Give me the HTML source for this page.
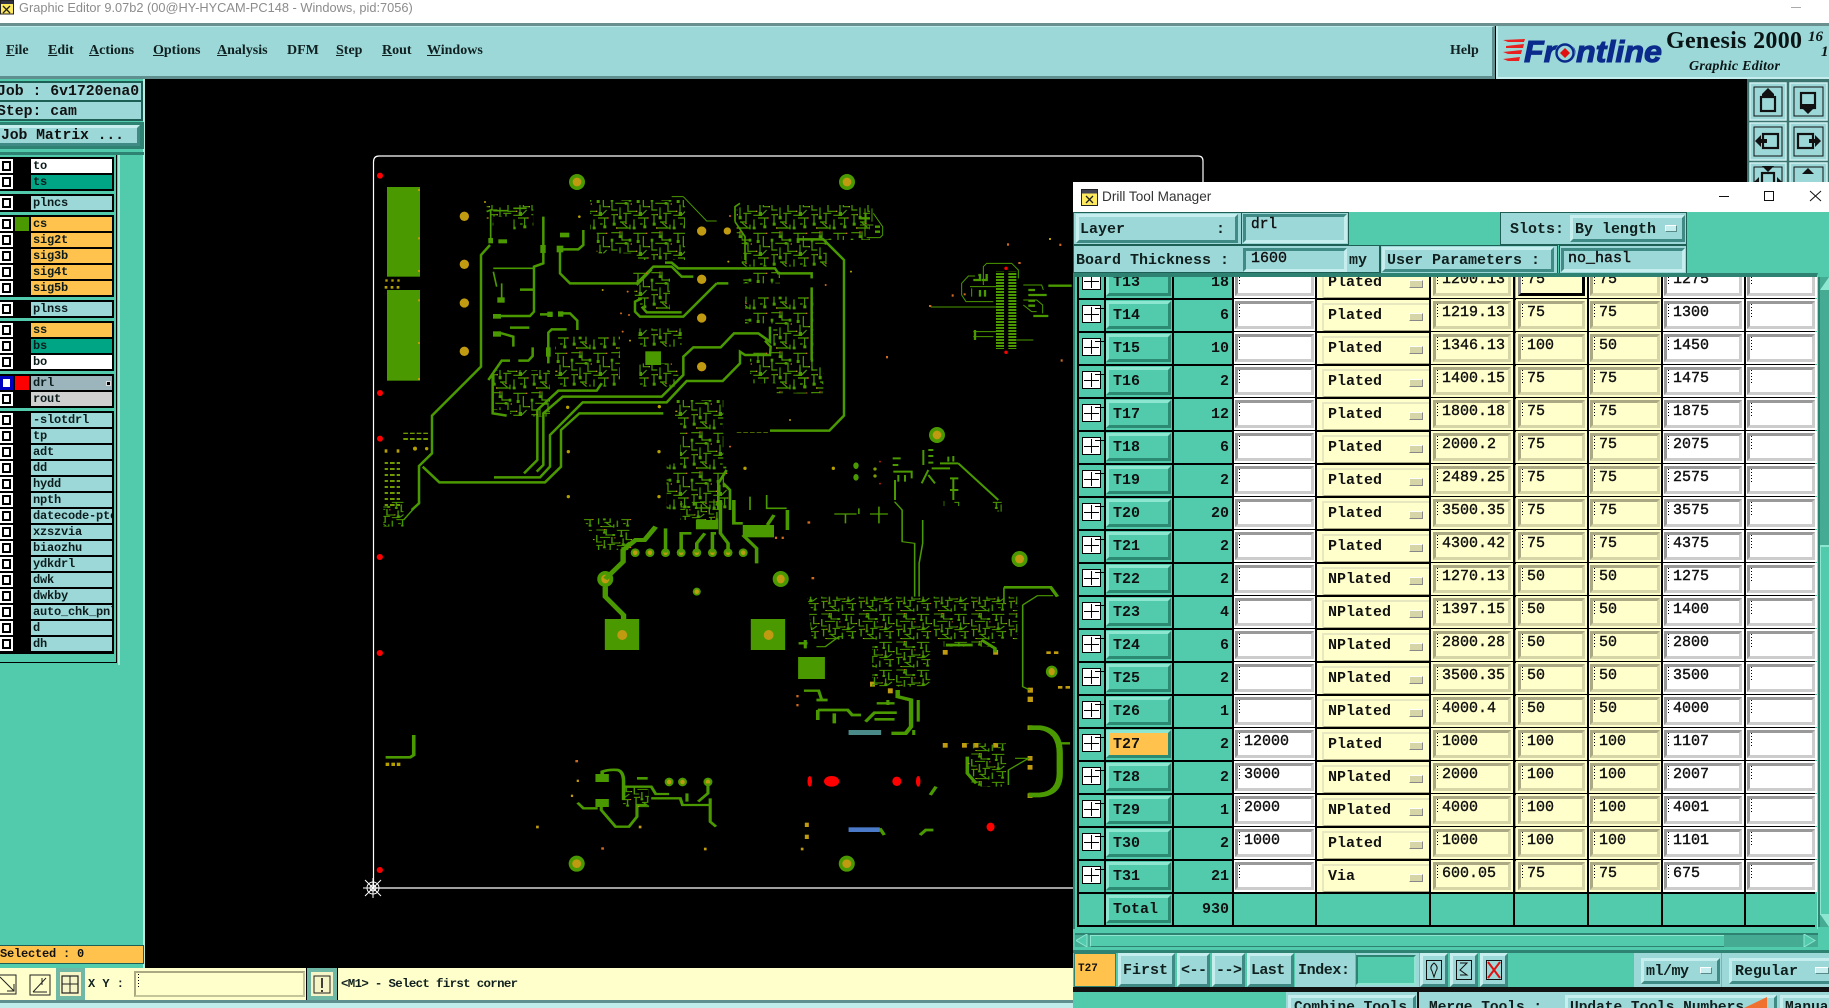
<!DOCTYPE html>
<html><head><meta charset="utf-8"><style>
html,body{margin:0;padding:0;background:#000;width:1829px;height:1008px;overflow:hidden}
*{box-sizing:border-box}
div,b,span{position:absolute;display:block}
#root{left:0;top:0;width:1829px;height:1008px;overflow:hidden;background:#000}
body{font-family:"Liberation Mono",monospace;font-weight:bold;color:#111}
.m{top:42px;font:bold 14px "Liberation Serif",serif;color:#102020;line-height:18px}
.m u{text-decoration:underline}
.bv{background:#9cd8d8;border:3px solid;border-color:#c6eeee #3f8a84 #3f8a84 #c6eeee}
.g{left:0;width:114px;background:#000}
.l{left:31px;width:81px;height:14px;background:#9cd8d8;font-size:12px;line-height:14px;padding-left:2px;letter-spacing:-.2px;white-space:nowrap;overflow:hidden;color:#0c1c1c}
.o{background:#ffc24d}
.cb{left:0;width:13px;height:14px;background:#000;border:2px solid #fff}
.cb:after{content:"";position:absolute;left:2px;top:2px;width:5px;height:6px;background:#fff}
.f{font-size:15px;line-height:18px;white-space:pre;color:#10201e}
.r{left:0;width:1815px;height:33px}
.r:before{content:"";position:absolute;left:1078px;width:737px;top:0;height:2px;background:#000}
.ic{left:1082px;top:7px;width:19px;height:18px;background:#fff;border:1px solid #000}
.ic:before{content:"";position:absolute;left:8px;top:1px;width:1px;height:14px;background:#000}
.ic:after{content:"";position:absolute;left:1px;top:8px;width:15px;height:1px;background:#000;box-shadow:11px -6px 0 0 #000}
.t{left:1106px;top:3px;width:65px;height:28px;background:#52cbac;border:3px solid;border-color:#8de6d0 #2c8a72 #2c8a72 #8de6d0;font-size:15px;line-height:24px;padding-left:4px}
.n{left:1173px;top:9px;width:56px;text-align:right;font-size:15px;line-height:18px}
.i{top:3px;height:28px;border:3px solid;font-size:15px;line-height:14px;padding:2px 0 0 6px;font-weight:normal;-webkit-text-stroke:.4px #111;white-space:pre;overflow:hidden}
.i:before{content:"";position:absolute;left:1px;top:0;width:1px;height:15px;background:repeating-linear-gradient(#000 0 1px,transparent 1px 3px)}
.w{background:#fff;border-color:#999 #ccc #ccc #999;box-shadow:0 0 0 2px #fff}
.y{background:#ffffcc;border-color:#aaa983 #d5d5a8 #d5d5a8 #aaa983;box-shadow:0 0 0 2px #ffffcc}
.a{left:1235px;width:79px}.c{left:1433px;width:78px}.e{left:1518px;width:67px}.h{left:1590px;width:70px}.j{left:1664px;width:78px}.k{left:1747px;width:68px}
.d{left:1316px;top:2px;width:113px;height:31px;background:#ffffcc;font-size:15px;line-height:32px;padding-left:12px}
.d:before{content:"";position:absolute;left:6px;top:3px;width:105px;height:25px;border:2px solid;border-color:#e8e8c0 #aaa983 #aaa983 #e8e8c0}
.d:after{content:"";position:absolute;left:93px;top:13px;width:12px;height:6px;background:#d5d5a8;border:1px solid;border-color:#fff #888 #888 #fff}
.vl{top:0;height:930px;width:2px;background:#000}
.nub{width:12px;height:7px;background:#c6eeee;border:1px solid;border-color:#fff #5a8a88 #5a8a88 #fff}
.st{left:0;font-size:14.8px;line-height:18px;white-space:pre}
</style></head><body><div id="root">

<!-- PCB canvas -->
<svg style="position:absolute;left:0;top:0" width="1829" height="1008" viewBox="0 0 1829 1008">
<defs>
<pattern id="p" width="120" height="120" patternUnits="userSpaceOnUse">
<path d="M4 8H30V20M36 4V30H60M70 10H110M84 10V36M100 18V50H118M6 30V60H22M16 40H48M54 38V64H80M30 52V84M90 44V76H70M4 74H24M12 74V104M40 70H64M48 70V96H30M72 88V116M84 84H114M104 84V112M20 114H60M90 102H98M60 104V118M110 60L96 74M34 96L52 112" fill="none" stroke="#4b9900" stroke-width="3.6"/>
<g fill="#4b9900"><rect x="26" y="16" width="9" height="8"/><rect x="56" y="26" width="8" height="9"/><rect x="80" y="30" width="9" height="9"/><rect x="2" y="26" width="8" height="9"/><rect x="44" y="36" width="8" height="8"/><rect x="86" y="66" width="10" height="12"/><rect x="26" y="78" width="9" height="10"/><rect x="68" y="110" width="9" height="8"/><rect x="100" y="106" width="9" height="9"/><rect x="8" y="98" width="9" height="9"/></g>
<g fill="#d06a20"><rect x="28" y="4" width="4" height="4"/><rect x="108" y="8" width="4" height="4"/><rect x="62" y="40" width="4" height="4"/><rect x="20" y="72" width="4" height="4"/><rect x="112" y="82" width="4" height="4"/><rect x="46" y="98" width="4" height="4"/></g>
<g fill="#b9a010"><rect x="116" y="48" width="4" height="4"/><rect x="78" y="62" width="4" height="4"/><rect x="18" y="112" width="4" height="4"/></g>
</pattern>
<pattern id="q" width="84" height="84" patternUnits="userSpaceOnUse">
<path d="M3 6H21V14M25 3V21H42M49 7H77M59 7V25M70 13V35H83M4 21V42H15M11 28H34M38 27V45H56M21 36V59M63 31V53H49M3 52H17M8 52V73M28 49H45M34 49V67H21M50 62V81M59 59H80M73 59V78M14 80H42M63 71H69M42 73V83M77 42L67 52M24 67L36 78" fill="none" stroke="#4b9900" stroke-width="3"/>
<g fill="#4b9900"><rect x="18" y="11" width="6" height="6"/><rect x="39" y="18" width="6" height="6"/><rect x="56" y="21" width="6" height="6"/><rect x="60" y="46" width="7" height="8"/><rect x="18" y="55" width="6" height="6"/><rect x="70" y="74" width="6" height="6"/></g>
<g fill="#d06a20"><rect x="20" y="3" width="3" height="3"/><rect x="43" y="28" width="3" height="3"/><rect x="14" y="50" width="3" height="3"/><rect x="78" y="57" width="3" height="3"/></g>
<g fill="#b9a010"><rect x="80" y="33" width="3" height="3"/><rect x="54" y="43" width="3" height="3"/><rect x="12" y="78" width="3" height="3"/></g>
</pattern>
<pattern id="s" width="10" height="9" patternUnits="userSpaceOnUse"><rect width="10" height="6" fill="#4b9900"/></pattern>
<pattern id="t" width="20" height="18" patternUnits="userSpaceOnUse"><rect width="14" height="6" fill="#6f9a00"/></pattern>
</defs>

<!-- outline -->
<path d="M373.5 888V162Q373.5 156 379 156H1198Q1203 156 1203 161V182" fill="none" stroke="#fff" stroke-width="1.2"/>
<path d="M373 888H1073" stroke="#fff" stroke-width="1.2"/>
<g stroke="#fff" stroke-width="1" fill="none"><circle cx="373" cy="888" r="6"/><circle cx="373" cy="888" r="3"/><path d="M365 880L381 896M381 880L365 896M373 878V898M363 888H383"/></g>

<!-- upper-left quadrant -->
<g transform="translate(370,150) scale(.33333)">
<g fill="#4b9900"><rect x="51" y="111" width="99" height="269"/><rect x="51" y="420" width="99" height="272"/></g>
<g fill="#b5a000"><rect x="144" y="117" width="6" height="6"/><rect x="144" y="262" width="6" height="6"/><rect x="144" y="360" width="6" height="6"/><rect x="144" y="448" width="6" height="6"/><rect x="144" y="576" width="6" height="6"/><rect x="144" y="684" width="6" height="6"/>
<rect x="46" y="388" width="7" height="7"/><rect x="64" y="388" width="7" height="7"/><rect x="82" y="388" width="7" height="7"/><rect x="44" y="408" width="8" height="8"/><rect x="62" y="408" width="8" height="8"/><rect x="80" y="408" width="8" height="8"/></g>
<g fill="#f00"><circle cx="30" cy="77" r="9"/><circle cx="30" cy="729" r="9"/><circle cx="30" cy="866" r="9"/></g>
<g fill="#c09a10"><circle cx="283" cy="199" r="14"/><circle cx="283" cy="343" r="14"/><circle cx="283" cy="459" r="14"/><circle cx="283" cy="604" r="14"/><circle cx="995" cy="243" r="14"/><circle cx="1072" cy="243" r="11"/><circle cx="995" cy="388" r="14"/><circle cx="995" cy="504" r="14"/><circle cx="995" cy="650" r="14"/></g>
<g fill="#4b9900"><circle cx="621" cy="96" r="24"/><circle cx="1431" cy="96" r="24"/></g><g fill="#c09a10"><circle cx="621" cy="96" r="13"/><circle cx="1431" cy="96" r="13"/></g>
<g fill="none" stroke="#4b9900" stroke-width="7.5">
<path d="M360 285L333 315V650L186 797V910L147 948V1060L125 1080"/>
<path d="M158 950L208 997H525L573 950V840L628 790H880"/>
<path d="M372 982H510L540 950V855L638 757H890L950 693H1058L1110 640V605L1125 615H1200L1202 590L1185 572"/>
<path d="M462 970L502 930V780L565 722H680L695 700"/>
<path d="M500 965L520 945V790L578 740H875L940 675V620L970 592H1052L1092 550H1165L1200 575V530"/>
<path d="M1200 842H1378L1422 797V330L1360 268H1280"/>
<path d="M570 295V370L600 400H800L850 350H905L935 380H970"/>
<path d="M800 405L845 358M570 298H625L640 285V240"/>
<path d="M885 338H905L925 355H1215L1225 370H1325V385M1325 412V630"/>
<path d="M1040 400L940 500H810L795 485V455L815 445M1040 400H1075M815 470L830 487H935"/>
<path d="M370 498H480L492 485V350L520 340V200M450 419H490"/>
<path d="M370 550H395L430 560V590M420 533H478"/>
<path d="M355 690L395 632H420M445 632H475L488 618V592"/>
<path d="M368 670V790L410 797"/>
<path d="M510 493H548M565 490H600L622 512V540M590 538H545L535 548V640"/>
<path stroke-width="5" d="M362 270V180L350 185M370 182H415M430 175H470M370 355H490M370 365L380 410M395 400V450M1095 215V170L1110 160M1095 215L1125 260V330"/>
<path stroke-width="3" d="M940 140L1010 213H1040M905 140H940"/>
</g>
<g fill="#4b9900"><rect x="570" y="248" width="28" height="14"/><rect x="385" y="268" width="26" height="12"/><rect x="355" y="264" width="14" height="16"/><rect x="511" y="285" width="16" height="24"/><rect x="560" y="287" width="20" height="20"/><rect x="369" y="492" width="24" height="14"/><rect x="369" y="544" width="24" height="16"/><rect x="532" y="485" width="16" height="16"/><rect x="564" y="484" width="16" height="16"/><rect x="826" y="604" width="47" height="41"/><rect x="382" y="442" width="22" height="16"/><rect x="528" y="592" width="14" height="28"/></g>
<g fill="url(#p)">
<path d="M660 150H945V330H800V310H680V240H660Z"/>
<path d="M1100 165H1500V270H1370V350H1115V265H1100Z"/>
<path d="M785 365H900V480H800Z"/>
<path d="M1120 365H1230V400H1120ZM1125 440H1330V730H1220V700H1140V600H1210V520H1125Z"/>
<path d="M370 660H540V800H420V780H370Z"/>
<path d="M555 560H750V710H555Z"/>
<path d="M805 535H935V590H805Z"/>
<path d="M808 640H925V710H808Z"/>
<path d="M915 750H1060V950H1075V1080H890V940H930V830H915Z"/>
<path d="M350 165H490V240H430V200H370V230H350Z"/>
<path d="M1280 650H1360V730H1280Z"/>
</g>
<g fill="url(#t)"><rect x="44" y="935" width="46" height="145"/><rect x="95" y="848" width="80" height="24"/></g>
<g fill="#b5a000"><circle cx="135" cy="896" r="6"/><circle cx="170" cy="896" r="5"/><rect x="44" y="898" width="8" height="10"/><rect x="80" y="898" width="8" height="10"/><circle cx="595" cy="905" r="5"/><circle cx="867" cy="905" r="5"/><circle cx="1125" cy="955" r="5"/><circle cx="1390" cy="955" r="5"/><circle cx="595" cy="1040" r="5"/><circle cx="867" cy="1040" r="5"/><circle cx="868" cy="770" r="5"/><circle cx="593" cy="772" r="5"/><circle cx="628" cy="200" r="4"/><circle cx="1075" cy="335" r="3"/><circle cx="1260" cy="810" r="3"/><circle cx="1443" cy="365" r="3"/><circle cx="698" cy="420" r="3"/><circle cx="780" cy="572" r="3"/><circle cx="345" cy="156" r="3"/></g>
<g fill="#d06a20"><circle cx="1367" cy="405" r="3"/><circle cx="777" cy="495" r="3"/><circle cx="753" cy="490" r="3"/><circle cx="758" cy="545" r="3"/><circle cx="1080" cy="890" r="3"/><circle cx="1080" cy="198" r="3"/><circle cx="773" cy="425" r="3"/></g>
<g fill="#4b9900"><ellipse cx="1458" cy="947" rx="8" ry="10"/><ellipse cx="1458" cy="982" rx="8" ry="10"/><rect x="1100" y="838" width="100" height="10" fill="url(#t)"/><path d="M1140 1040V1080M1190 1035V1075H1250" fill="none" stroke="#4b9900" stroke-width="5"/><path d="M1045 1000L1070 960M1045 990V1080M1060 1000L1080 1020V1080" fill="none" stroke="#4b9900" stroke-width="8"/></g>
</g>

<!-- upper right cluster -->
<g transform="translate(860,150) scale(.33333)">
<g fill="url(#s)"><rect x="408" y="365" width="24" height="232"/><rect x="445" y="365" width="24" height="232"/></g>
<g fill="none" stroke="#4b9900" stroke-width="3">
<path d="M212 471H420M345 378H325L305 400V435L318 455H400M370 405V350L380 340H455L475 360V385M330 410H420M335 415V440M490 405H545L550 420M490 450H530L548 465V490M490 465L515 485H530M340 545H410M340 560H400M470 570H520M40 190L68 230V255L60 263H20M15 175V260M36 175V215M0 225H40"/>
<path stroke-width="7" d="M565 407H635M520 498H565M505 420H525M505 435H560M505 452H525M505 467H525M355 375H360V390H340M380 372V390H365M360 420V440M375 420V440M345 540V570M0 205H30M45 230H60M45 245H60"/>
</g>
<g fill="#f00"><circle cx="438" cy="355" r="5"/><circle cx="438" cy="607" r="5"/></g>
<g fill="#d06a20"><rect x="275" y="433" width="6" height="7"/><rect x="441" y="280" width="6" height="7"/><rect x="598" y="281" width="6" height="7"/><rect x="602" y="628" width="6" height="7"/><rect x="78" y="618" width="6" height="7"/><rect x="311" y="430" width="6" height="6"/><rect x="475" y="336" width="7" height="6"/><rect x="207" y="465" width="7" height="6"/></g>
<rect x="567" y="264" width="6" height="6" fill="#b5a000"/>
<circle cx="231" cy="855" r="24" fill="#4b9900"/><circle cx="231" cy="855" r="13" fill="#c09a10"/>
<g fill="none" stroke="#4b9900" stroke-width="6"><path d="M295 940L415 1050M240 940H295M105 990V1050M190 900V945M205 900H220M205 918H220M205 938H220M215 955H270M205 960L185 1000M205 975L225 1000M98 925H122M98 945H115M100 965H155V985M135 975V995M115 975V995M265 920V935M280 918V935M270 985H295M270 1020H295M280 985V1050"/></g>
<g fill="#7a9a00"><circle cx="45" cy="957" r="5"/><circle cx="45" cy="978" r="5"/></g><g fill="#a02010"><circle cx="60" cy="935" r="3"/><circle cx="60" cy="1001" r="3"/></g>
</g>

<!-- lower quadrant -->
<g transform="translate(370,500) scale(.44643,.33333)">
<g fill="#f00"><ellipse cx="22" cy="171" rx="7" ry="9"/><ellipse cx="22" cy="459" rx="7" ry="9"/><ellipse cx="22" cy="1110" rx="7" ry="9"/><ellipse cx="985" cy="844" rx="5" ry="16"/><ellipse cx="1034" cy="844" rx="17" ry="16"/><ellipse cx="1180" cy="844" rx="10" ry="14"/><ellipse cx="1228" cy="844" rx="5" ry="16"/><ellipse cx="1390" cy="981" rx="9" ry="13"/></g>
<g fill="#4b9900"><ellipse cx="527" cy="237" rx="18" ry="24"/><ellipse cx="920" cy="237" rx="18" ry="24"/><ellipse cx="1455" cy="177" rx="18" ry="24"/><ellipse cx="1527" cy="515" rx="13" ry="18"/><ellipse cx="463" cy="1091" rx="18" ry="24"/><ellipse cx="1068" cy="1091" rx="18" ry="24"/><ellipse cx="732" cy="275" rx="9" ry="12"/>
<rect x="526" y="357" width="77" height="93"/><rect x="853" y="357" width="77" height="93"/><rect x="959" y="471" width="60" height="66"/><rect x="730" y="60" width="50" height="28"/><rect x="835" y="75" width="70" height="37"/><rect x="505" y="822" width="30" height="24"/><rect x="505" y="897" width="30" height="24"/>
<ellipse cx="594" cy="158" rx="10" ry="13"/><ellipse cx="627" cy="158" rx="10" ry="13"/><ellipse cx="662" cy="158" rx="10" ry="13"/><ellipse cx="697" cy="158" rx="10" ry="13"/><ellipse cx="732" cy="158" rx="10" ry="13"/><ellipse cx="767" cy="158" rx="10" ry="13"/><ellipse cx="802" cy="158" rx="10" ry="13"/><ellipse cx="836" cy="158" rx="10" ry="13"/><ellipse cx="670" cy="846" rx="10" ry="13"/><ellipse cx="700" cy="846" rx="10" ry="13"/><ellipse cx="757" cy="846" rx="10" ry="13"/></g>
<g fill="#c09a10"><ellipse cx="527" cy="237" rx="9" ry="13"/><ellipse cx="920" cy="237" rx="9" ry="13"/><ellipse cx="1455" cy="177" rx="10" ry="13"/><ellipse cx="1527" cy="515" rx="7" ry="11"/><ellipse cx="463" cy="1091" rx="10" ry="13"/><ellipse cx="1068" cy="1091" rx="10" ry="13"/><ellipse cx="732" cy="275" rx="5" ry="7"/><ellipse cx="565" cy="405" rx="11" ry="15"/><ellipse cx="893" cy="405" rx="11" ry="15"/>
<ellipse cx="594" cy="158" rx="5" ry="7"/><ellipse cx="627" cy="158" rx="5" ry="7"/><ellipse cx="662" cy="158" rx="5" ry="7"/><ellipse cx="697" cy="158" rx="5" ry="7"/><ellipse cx="732" cy="158" rx="5" ry="7"/><ellipse cx="767" cy="158" rx="5" ry="7"/><ellipse cx="802" cy="158" rx="5" ry="7"/><ellipse cx="836" cy="158" rx="5" ry="7"/><ellipse cx="670" cy="846" rx="5" ry="7"/><ellipse cx="700" cy="846" rx="5" ry="7"/><ellipse cx="757" cy="846" rx="5" ry="7"/>
<rect x="1473" y="563" width="12" height="15"/><rect x="1473" y="590" width="12" height="16"/><rect x="1283" y="450" width="11" height="14"/><rect x="1396" y="450" width="11" height="14"/><rect x="1473" y="768" width="11" height="14"/><rect x="1473" y="795" width="11" height="14"/><rect x="1283" y="729" width="11" height="14"/><rect x="1326" y="729" width="11" height="14"/><rect x="1352" y="729" width="11" height="14"/><rect x="1396" y="729" width="11" height="14"/><rect x="1515" y="454" width="10" height="8"/><rect x="1532" y="454" width="10" height="8"/><rect x="1541" y="558" width="10" height="8"/><rect x="1558" y="558" width="10" height="8"/><rect x="1473" y="676" width="11" height="14"/><rect x="1473" y="880" width="11" height="14"/><rect x="1120" y="545" width="11" height="15"/><rect x="1160" y="565" width="11" height="15"/>
<rect x="974" y="968" width="9" height="13"/><rect x="974" y="1004" width="9" height="13"/><rect x="965" y="1043" width="6" height="8"/><rect x="748" y="1043" width="6" height="8"/><rect x="372" y="977" width="6" height="8"/><rect x="602" y="977" width="6" height="8"/><rect x="463" y="839" width="5" height="7"/><rect x="450" y="884" width="5" height="7"/></g>
<g fill="#d06a20"><rect x="460" y="780" width="6" height="7"/><rect x="518" y="1042" width="6" height="7"/><rect x="980" y="64" width="6" height="7"/><rect x="989" y="231" width="6" height="7"/><rect x="907" y="110" width="5" height="7"/><rect x="922" y="110" width="5" height="7"/><rect x="955" y="585" width="5" height="7"/><rect x="955" y="612" width="5" height="7"/></g>
<g fill="none" stroke="#4b9900" stroke-width="12">
<path d="M527 237L567 185V150L595 120H615L640 80"/><path d="M527 260V290L568 345V360"/>
<path stroke-width="10" d="M1182 570V590L1212 600V680L1200 700H1168"/>
<path stroke-width="14" d="M1475 683H1500Q1545 690 1545 760V820Q1545 880 1500 885H1475"/>
<path stroke-width="8" d="M662 158V85M697 158V100H720M732 158V130L750 100M767 158V100H775M802 158V130L785 100V0M866 190V145L835 105M905 45L890 75M935 30V90M815 0V70H835M1180 638H1130L1110 665M1130 658H1175M1003 630H1070L1080 645H1100M1003 630V660M1040 640V670M1000 600H1025M1338 770V820L1358 850M1420 262H1525L1540 290M1290 435H1350M1370 420L1400 445V457M1268 860L1255 885M1232 1005L1245 990H1262M1142 985L1152 1005M98 705V765L90 772H35M520 822V815Q535 808 555 810Q568 815 568 845V900M598 835H622"/>
<path stroke-width="7" d="M518 921V930L550 980H580L598 950V915H620M465 908L478 925H510M570 860H630L640 882H670M630 895H695L700 915H760M757 850V880L735 905M762 895V965L775 980M710 880V905M1135 610H1175M1160 600V615M1228 600V665M1218 690V705M1545 730H1568M975 420V445M960 430H980M972 572H1005L1012 600"/>
<path stroke-width="3.5" d="M1175 5L1192 30V125L1220 130V290M1238 60V130L1230 190V290M1462 315V560L1478 570M1462 315L1495 287H1530M1000 440H1020L1050 410H1060M1420 262V310M1445 775H1475L1430 810V855M75 60L112 5M1040 42H1090M1065 42V70M1120 42H1160M1140 20V70M1095 25V42"/>
</g>
<rect x="1072" y="690" width="73" height="15" fill="#4a8a88"/><rect x="1072" y="982" width="70" height="14" fill="#4a7ac8"/>
<g fill="url(#q)">
<path d="M980 290H1450V420H1400V440H1285V420H1255V560H1125V420H990Z"/>
<path d="M478 55H590V150H510Z"/>
<path d="M1335 730H1425V860H1345Z"/>
<path d="M565 860H625V925H565Z"/>
<path d="M30 0H75V80H30Z"/>
<path d="M1285 0H1320V18H1285ZM1395 0H1415V35H1395Z"/>
<path d="M695 0H780V60H695Z"/>
</g>
<g fill="#b5a000"><rect x="35" y="788" width="8" height="10"/><rect x="48" y="788" width="8" height="10"/><rect x="60" y="788" width="8" height="10"/></g>
</g>
</svg>

<!-- top title -->
<div style="left:0;top:0;width:1829px;height:24px;background:#fff"></div>
<svg style="position:absolute;left:0;top:0" width="14" height="15"><rect x=".5" y=".5" width="13" height="13.5" fill="#ffe95c" stroke="#222"/><rect x="1" y="1" width="12" height="3" fill="#334"/><path d="M3 6L10 13M10 6L3 13" stroke="#222" stroke-width="1.3"/></svg>
<div style="left:19px;top:0;height:16px;font:12.8px/16px 'Liberation Sans',sans-serif;color:#8c8c8c;white-space:pre">Graphic Editor 9.07b2 (00@HY-HYCAM-PC148 - Windows, pid:7056)</div>
<div style="left:1791px;top:7px;width:10px;height:1px;background:#aaa"></div>

<!-- menu bar -->
<div style="left:0;top:23px;width:1829px;height:3px;background:#6a8f8f"></div>
<div style="left:0;top:26px;width:1495px;height:53px;background:#9cd8d8;border-bottom:3px solid #5f8f8e;border-right:3px solid #5f8f8e;border-top:1px solid #bfeaea"></div>
<div class="m" style="left:6px"><u>F</u>ile</div>
<div class="m" style="left:48px"><u>E</u>dit</div>
<div class="m" style="left:89px"><u>A</u>ctions</div>
<div class="m" style="left:153px"><u>O</u>ptions</div>
<div class="m" style="left:217px"><u>A</u>nalysis</div>
<div class="m" style="left:287px">DFM</div>
<div class="m" style="left:336px"><u>S</u>tep</div>
<div class="m" style="left:382px"><u>R</u>out</div>
<div class="m" style="left:427px"><u>W</u>indows</div>
<div class="m" style="left:1450px">Help</div>

<!-- logo panel -->
<div style="left:1496px;top:26px;width:333px;height:53px;background:#9cd8d8;border-left:2px solid #c6eeee;border-bottom:2px solid #c6eeee"></div>
<svg style="position:absolute;left:1496px;top:26px" width="333" height="53" viewBox="1496 26 333 53">
<g fill="#e82020"><path d="M1503 40L1525 39L1524 42L1508 42Z"/><path d="M1506 46L1524 44L1523 48L1506 48Z"/><path d="M1503 52L1522 50L1521 54L1508 54Z"/><path d="M1503 59L1520 57L1519 61L1508 61Z"/></g>
<text x="1524" y="62" font-family="Liberation Sans" font-weight="bold" font-style="italic" font-size="31" fill="#0a2a8c" stroke="#0a2a8c" stroke-width="1" textLength="138" lengthAdjust="spacingAndGlyphs">Frontline</text>
<circle cx="1565" cy="53" r="10" fill="#9cd8d8"/><circle cx="1565" cy="53" r="8.5" fill="none" stroke="#0a2a8c" stroke-width="2.4"/><path d="M1565 48L1570 53L1565 58L1560 53Z" fill="#e01010"/>
<text x="1666" y="48" font-family="Liberation Serif" font-weight="bold" font-size="24" fill="#0a1414" textLength="136">Genesis 2000</text>
<text x="1808" y="41" font-family="Liberation Serif" font-weight="bold" font-style="italic" font-size="15" fill="#0a1414">16</text>
<text x="1821" y="56" font-family="Liberation Serif" font-weight="bold" font-style="italic" font-size="15" fill="#0a1414">1</text>
<text x="1689" y="70" font-family="Liberation Serif" font-weight="bold" font-style="italic" font-size="14" fill="#0a1414" textLength="91">Graphic Editor</text>
</svg>

<!-- right toolbar -->
<div style="left:1747px;top:79px;width:82px;height:103px;background:#3c7470"></div>
<svg style="position:absolute;left:1749px;top:82px" width="80" height="100" viewBox="0 0 80 100">
<g fill="#9cd8d8" stroke="#d0f0f0" stroke-width="1.5"><rect x="1" y="1" width="36" height="37"/><rect x="41" y="1" width="37" height="37"/><rect x="1" y="41" width="36" height="37"/><rect x="41" y="41" width="37" height="37"/><rect x="1" y="81" width="36" height="37"/><rect x="41" y="81" width="37" height="37"/></g>
<g fill="none" stroke="#111" stroke-width="1"><rect x="5" y="5" width="28" height="29"/><rect x="45" y="5" width="29" height="29"/><rect x="5" y="45" width="28" height="29"/><rect x="45" y="45" width="29" height="29"/><rect x="5" y="85" width="28" height="29"/><rect x="45" y="85" width="29" height="29"/></g>
<g fill="none" stroke="#111" stroke-width="2.2"><rect x="12" y="15" width="14" height="14"/><rect x="52" y="11" width="14" height="15"/><rect x="14" y="52" width="15" height="14"/><rect x="49" y="52" width="15" height="14"/><rect x="13" y="91" width="12" height="11"/></g>
<g fill="#111"><path d="M19 6L25 12V16H13V12Z"/><path d="M59 32L53 26V22H65V26Z"/><path d="M6 59L12 53V65ZM12 57H18V61H12Z"/><path d="M72 59L66 53V65ZM66 57H60V61H66Z"/><path d="M13 84H25L19 90Z"/><path d="M5 100L10 95V105ZM33 100L28 95V105Z"/><path d="M59 86L65 92H53Z"/></g>
</svg>

<!-- left sidebar -->
<div style="left:0;top:79px;width:145px;height:889px;background:#52cbac;border-right:2px solid #b8ece0"></div>
<div style="left:0;top:81px;width:143px;height:40px;background:#9cd8d8;border:1px solid #1e5f55;border-width:2px 2px 1px 0"></div>
<div style="left:0;top:100px;width:143px;height:2px;background:#1e5f55"></div>
<div style="left:0;top:119px;width:143px;height:2px;background:#1e5f55"></div>
<div class="st" style="top:83px;left:-3px">Job : 6v1720ena0</div>
<div class="st" style="top:103px;left:-3px">Step: cam</div>
<div style="left:0;top:122px;width:144px;height:27px;background:#2d8272"></div>
<div class="bv" style="left:0;top:125px;width:140px;height:21px;border-left:0"></div>
<div class="st" style="top:127px;left:1px;letter-spacing:-.1px">Job Matrix ...</div>
<div style="left:0;top:152px;width:144px;height:3px;background:#2d8272"></div>
<div style="left:118px;top:155px;width:2px;height:510px;background:#a5ecd8"></div>
<div style="left:0;top:155px;width:117px;height:508px;border-right:1px solid #000;border-bottom:1px solid #000"></div>

<div class="g" style="top:157px;height:34px"></div>
<div class="g" style="top:194px;height:18px"></div>
<div class="g" style="top:215px;height:82px"></div>
<div class="g" style="top:300px;height:18px"></div>
<div class="g" style="top:321px;height:50px"></div>
<div class="g" style="top:374px;height:34px"></div>
<div class="g" style="top:411px;height:243px"></div>

<div class="cb" style="top:159px"></div><div class="l" style="top:159px;background:#fff">to</div>
<div class="cb" style="top:175px"></div><div class="l" style="top:175px;background:#00a585">ts</div>
<div class="cb" style="top:196px"></div><div class="l" style="top:196px">plncs</div>
<div class="cb" style="top:217px"></div><div style="left:15px;top:217px;width:14px;height:14px;background:#4b9900"></div><div class="l o" style="top:217px">cs</div>
<div class="cb" style="top:233px"></div><div class="l o" style="top:233px">sig2t</div>
<div class="cb" style="top:249px"></div><div class="l o" style="top:249px">sig3b</div>
<div class="cb" style="top:265px"></div><div class="l o" style="top:265px">sig4t</div>
<div class="cb" style="top:281px"></div><div class="l o" style="top:281px">sig5b</div>
<div class="cb" style="top:302px"></div><div class="l" style="top:302px">plnss</div>
<div class="cb" style="top:323px"></div><div class="l o" style="top:323px">ss</div>
<div class="cb" style="top:339px"></div><div class="l" style="top:339px;background:#00a585">bs</div>
<div class="cb" style="top:355px"></div><div class="l" style="top:355px;background:#fff">bo</div>
<div style="left:0;top:376px;width:13px;height:14px;background:#0000c0"></div><div style="left:3px;top:379px;width:7px;height:8px;background:#fff"></div><div style="left:15px;top:376px;width:14px;height:14px;background:#f00"></div><div class="l" style="top:376px;background:#9cb4bc">drl</div>
<div style="left:106px;top:381px;width:5px;height:5px;background:#000;border:1px solid #ddd"></div>
<div class="cb" style="top:392px"></div><div class="l" style="top:392px;background:#d0d0d0">rout</div>
<div class="cb" style="top:413px"></div><div class="l" style="top:413px">-slotdrl</div>
<div class="cb" style="top:429px"></div><div class="l" style="top:429px">tp</div>
<div class="cb" style="top:445px"></div><div class="l" style="top:445px">adt</div>
<div class="cb" style="top:461px"></div><div class="l" style="top:461px">dd</div>
<div class="cb" style="top:477px"></div><div class="l" style="top:477px">hydd</div>
<div class="cb" style="top:493px"></div><div class="l" style="top:493px">npth</div>
<div class="cb" style="top:509px"></div><div class="l" style="top:509px">datecode-ptc</div>
<div class="cb" style="top:525px"></div><div class="l" style="top:525px">xzszvia</div>
<div class="cb" style="top:541px"></div><div class="l" style="top:541px">biaozhu</div>
<div class="cb" style="top:557px"></div><div class="l" style="top:557px">ydkdrl</div>
<div class="cb" style="top:573px"></div><div class="l" style="top:573px">dwk</div>
<div class="cb" style="top:589px"></div><div class="l" style="top:589px">dwkby</div>
<div class="cb" style="top:605px"></div><div class="l" style="top:605px">auto_chk_pnl</div>
<div class="cb" style="top:621px"></div><div class="l" style="top:621px">d</div>
<div class="cb" style="top:637px"></div><div class="l" style="top:637px">dh</div>

<div style="left:0;top:945px;width:144px;height:19px;background:#ffc24d;border:1px solid #1e5f55;border-left:0;font-size:12px;line-height:17px;white-space:pre;letter-spacing:-.2px;overflow:hidden">Selected : 0</div>

<!-- status bar -->
<div style="left:0;top:968px;width:1073px;height:32px;background:#ffffcc"></div>
<div style="left:0;top:1000px;width:1829px;height:3px;background:#5f8f8e"></div>
<div style="left:0;top:1003px;width:1829px;height:5px;background:#c0ecec"></div>
<div style="left:56px;top:968px;width:29px;height:32px;background:#6fb8a6"></div>
<div style="left:60px;top:972px;width:21px;height:24px;background:#f5f5c8"></div>
<div style="left:306px;top:968px;width:32px;height:32px;background:#6fb8a6;border-left:1px solid #000;border-right:1px solid #000"></div>
<div style="left:311px;top:972px;width:22px;height:24px;background:#f5f5c8"></div>
<div style="left:134px;top:971px;width:171px;height:26px;background:#ffffcc;border:2px solid;border-color:#aaa983 #c5c59a #c5c59a #aaa983"></div>
<div style="left:138px;top:974px;width:1px;height:15px;background:repeating-linear-gradient(#000 0 1px,transparent 1px 3px)"></div>
<svg style="position:absolute;left:0;top:968px" width="340" height="32" viewBox="0 0 340 32">
<g fill="none" stroke="#222" stroke-width="1"><path d="M0 7H16V26H0"/><path d="M0 9L14 23M14 16V23H7"/><rect x="30" y="7" width="20" height="20"/><path d="M33 24L46 10M33 24H47M42 10V17"/><rect x="62" y="8" width="16" height="17" stroke-width="1.2"/><path d="M70 8V25M62 16H78"/><rect x="314" y="8" width="16" height="17"/></g>
<path d="M322 10V20M322 22V24" stroke="#111" stroke-width="1.6"/>
</svg>
<div class="f" style="left:88px;top:975px;font-size:12px">X Y :</div>
<div class="f" style="left:341px;top:975px;font-size:12.4px;letter-spacing:-.65px">&lt;M1&gt; - Select first corner</div>

<!-- Dialog -->
<div style="left:1073px;top:182px;width:756px;height:826px;background:#52cbac;overflow:hidden">
<div style="left:0;top:0;width:756px;height:30px;background:#fff"></div>
</div>
<svg style="position:absolute;left:1081px;top:189px" width="17" height="17"><rect x=".5" y=".5" width="16" height="16" fill="#ffe95c" stroke="#222"/><rect x="1" y="1" width="15" height="3.5" fill="#445"/><path d="M5 7L12 14M12 7L5 14" stroke="#222" stroke-width="1.3"/></svg>
<div style="left:1102px;top:188px;font:13.6px/18px 'Liberation Sans',sans-serif;color:#333;white-space:pre">Drill Tool Manager</div>
<svg style="position:absolute;left:1715px;top:186px" width="114" height="24"><path d="M4 10.5H14" stroke="#111"/><rect x="49.5" y="5.5" width="9" height="9" fill="none" stroke="#111"/><path d="M95 5L106 15M106 5L95 15" stroke="#111"/></svg>

<div style="left:1073px;top:212px;width:173px;height:33px;background:#9cd8d8;border:1px solid #1e5f55"></div>
<div class="bv" style="left:1076px;top:214px;width:162px;height:29px"></div>
<div class="f" style="left:1080px;top:221px">Layer</div><div class="f" style="left:1216px;top:221px">:</div>
<div style="left:1241px;top:212px;width:108px;height:33px;background:#9cd8d8;border:1px solid #1e5f55"></div>
<div style="left:1243px;top:214px;width:104px;height:29px;background:#9cd8d8;border:3px solid;border-color:#3f8a84 #c6eeee #c6eeee #3f8a84;font-size:14.5px;line-height:14px;padding:1px 0 0 5px;font-weight:normal;-webkit-text-stroke:.4px #111">drl</div>
<div style="left:1500px;top:212px;width:187px;height:33px;background:#9cd8d8;border:1px solid #1e5f55"></div>
<div class="f" style="left:1510px;top:221px">Slots:</div>
<div class="bv" style="left:1570px;top:215px;width:115px;height:27px"></div>
<div class="f" style="left:1575px;top:221px">By length</div>
<div class="nub" style="left:1665px;top:225px"></div>

<div style="left:1073px;top:245px;width:307px;height:28px;background:#9cd8d8;border:1px solid #1e5f55"></div>
<div class="f" style="left:1076px;top:252px">Board Thickness :</div>
<div style="left:1243px;top:248px;width:104px;height:24px;background:#9cd8d8;border:3px solid;border-color:#3f8a84 #c6eeee #c6eeee #3f8a84;font-size:15px;line-height:14px;padding:1px 0 0 5px;font-weight:normal;-webkit-text-stroke:.4px #111">1600</div>
<div class="f" style="left:1349px;top:252px">my</div>
<div style="left:1380px;top:245px;width:178px;height:29px;background:#9cd8d8;border:1px solid #1e5f55"></div>
<div class="bv" style="left:1382px;top:247px;width:172px;height:25px"></div>
<div class="f" style="left:1387px;top:252px">User Parameters :</div>
<div style="left:1559px;top:245px;width:128px;height:29px;background:#9cd8d8;border:1px solid #1e5f55"></div>
<div style="left:1561px;top:248px;width:124px;height:24px;background:#9cd8d8;border:3px solid;border-color:#3f8a84 #c6eeee #c6eeee #3f8a84;font-size:15px;line-height:14px;padding:1px 0 0 4px;font-weight:normal;-webkit-text-stroke:.4px #111">no_hasl</div>

<!-- table -->
<div style="left:1073px;top:273px;width:745px;height:656px;background:#52cbac;border-top:4px solid #2d8272;border-left:2px solid #2d8272;border-right:1px solid #8de6d0;overflow:hidden">
<div id="tb" style="left:-1075px;top:-277px;width:1829px;height:1008px">

<div class="r" style="top:265px"><div class="ic"></div><div class="t">T13</div><div class="n">18</div><div class="i w a"></div><div class="d">Plated</div><div class="i y c">1200.13</div><div class="i y e" style="border-color:#888 #000 #000 #888">75</div><div class="i y h">75</div><div class="i w j">1275</div><div class="i w k"></div></div>
<div class="r" style="top:298px"><div class="ic"></div><div class="t">T14</div><div class="n">6</div><div class="i w a"></div><div class="d">Plated</div><div class="i y c">1219.13</div><div class="i y e">75</div><div class="i y h">75</div><div class="i w j">1300</div><div class="i w k"></div></div>
<div class="r" style="top:331px"><div class="ic"></div><div class="t">T15</div><div class="n">10</div><div class="i w a"></div><div class="d">Plated</div><div class="i y c">1346.13</div><div class="i y e">100</div><div class="i y h">50</div><div class="i w j">1450</div><div class="i w k"></div></div>
<div class="r" style="top:364px"><div class="ic"></div><div class="t">T16</div><div class="n">2</div><div class="i w a"></div><div class="d">Plated</div><div class="i y c">1400.15</div><div class="i y e">75</div><div class="i y h">75</div><div class="i w j">1475</div><div class="i w k"></div></div>
<div class="r" style="top:397px"><div class="ic"></div><div class="t">T17</div><div class="n">12</div><div class="i w a"></div><div class="d">Plated</div><div class="i y c">1800.18</div><div class="i y e">75</div><div class="i y h">75</div><div class="i w j">1875</div><div class="i w k"></div></div>
<div class="r" style="top:430px"><div class="ic"></div><div class="t">T18</div><div class="n">6</div><div class="i w a"></div><div class="d">Plated</div><div class="i y c">2000.2</div><div class="i y e">75</div><div class="i y h">75</div><div class="i w j">2075</div><div class="i w k"></div></div>
<div class="r" style="top:463px"><div class="ic"></div><div class="t">T19</div><div class="n">2</div><div class="i w a"></div><div class="d">Plated</div><div class="i y c">2489.25</div><div class="i y e">75</div><div class="i y h">75</div><div class="i w j">2575</div><div class="i w k"></div></div>
<div class="r" style="top:496px"><div class="ic"></div><div class="t">T20</div><div class="n">20</div><div class="i w a"></div><div class="d">Plated</div><div class="i y c">3500.35</div><div class="i y e">75</div><div class="i y h">75</div><div class="i w j">3575</div><div class="i w k"></div></div>
<div class="r" style="top:529px"><div class="ic"></div><div class="t">T21</div><div class="n">2</div><div class="i w a"></div><div class="d">Plated</div><div class="i y c">4300.42</div><div class="i y e">75</div><div class="i y h">75</div><div class="i w j">4375</div><div class="i w k"></div></div>
<div class="r" style="top:562px"><div class="ic"></div><div class="t">T22</div><div class="n">2</div><div class="i w a"></div><div class="d">NPlated</div><div class="i y c">1270.13</div><div class="i y e">50</div><div class="i y h">50</div><div class="i w j">1275</div><div class="i w k"></div></div>
<div class="r" style="top:595px"><div class="ic"></div><div class="t">T23</div><div class="n">4</div><div class="i w a"></div><div class="d">NPlated</div><div class="i y c">1397.15</div><div class="i y e">50</div><div class="i y h">50</div><div class="i w j">1400</div><div class="i w k"></div></div>
<div class="r" style="top:628px"><div class="ic"></div><div class="t">T24</div><div class="n">6</div><div class="i w a"></div><div class="d">NPlated</div><div class="i y c">2800.28</div><div class="i y e">50</div><div class="i y h">50</div><div class="i w j">2800</div><div class="i w k"></div></div>
<div class="r" style="top:661px"><div class="ic"></div><div class="t">T25</div><div class="n">2</div><div class="i w a"></div><div class="d">NPlated</div><div class="i y c">3500.35</div><div class="i y e">50</div><div class="i y h">50</div><div class="i w j">3500</div><div class="i w k"></div></div>
<div class="r" style="top:694px"><div class="ic"></div><div class="t">T26</div><div class="n">1</div><div class="i w a"></div><div class="d">NPlated</div><div class="i y c">4000.4</div><div class="i y e">50</div><div class="i y h">50</div><div class="i w j">4000</div><div class="i w k"></div></div>
<div class="r" style="top:727px"><div class="ic"></div><div class="t" style="background:#ffc24d">T27</div><div class="n">2</div><div class="i w a">12000</div><div class="d">Plated</div><div class="i y c">1000</div><div class="i y e">100</div><div class="i y h">100</div><div class="i w j">1107</div><div class="i w k"></div></div>
<div class="r" style="top:760px"><div class="ic"></div><div class="t">T28</div><div class="n">2</div><div class="i w a">3000</div><div class="d">NPlated</div><div class="i y c">2000</div><div class="i y e">100</div><div class="i y h">100</div><div class="i w j">2007</div><div class="i w k"></div></div>
<div class="r" style="top:793px"><div class="ic"></div><div class="t">T29</div><div class="n">1</div><div class="i w a">2000</div><div class="d">NPlated</div><div class="i y c">4000</div><div class="i y e">100</div><div class="i y h">100</div><div class="i w j">4001</div><div class="i w k"></div></div>
<div class="r" style="top:826px"><div class="ic"></div><div class="t">T30</div><div class="n">2</div><div class="i w a">1000</div><div class="d">Plated</div><div class="i y c">1000</div><div class="i y e">100</div><div class="i y h">100</div><div class="i w j">1101</div><div class="i w k"></div></div>
<div class="r" style="top:859px"><div class="ic"></div><div class="t">T31</div><div class="n">21</div><div class="i w a"></div><div class="d">Via</div><div class="i y c">600.05</div><div class="i y e">75</div><div class="i y h">75</div><div class="i w j">675</div><div class="i w k"></div></div>
<div class="r" style="top:892px"><div class="t">Total</div><div class="n">930</div></div>
<div style="left:1078px;top:925px;width:737px;height:2px;background:#000"></div>

<div class="vl" style="left:1077px;height:927px"></div>
<div class="vl" style="left:1104px;height:927px"></div>
<div class="vl" style="left:1172px;height:927px"></div>
<div class="vl" style="left:1232px;height:927px"></div>
<div class="vl" style="left:1315px;height:927px"></div>
<div class="vl" style="left:1429px;height:927px"></div>
<div class="vl" style="left:1513px;height:927px"></div>
<div class="vl" style="left:1587px;height:927px"></div>
<div class="vl" style="left:1661px;height:927px"></div>
<div class="vl" style="left:1744px;height:927px"></div>
</div></div>

<!-- vertical scrollbar -->
<div style="left:1818px;top:277px;width:11px;height:650px;background:#45ab92;border-left:2px solid #2d8272"></div>
<div style="left:1820px;top:545px;width:9px;height:370px;background:#52cbac;border-top:2px solid #8de6d0;border-left:1px solid #8de6d0"></div>
<svg style="position:absolute;left:1820px;top:277px" width="9" height="13"><path d="M0 13L9 0V13Z" fill="#8de6d0"/></svg>
<svg style="position:absolute;left:1820px;top:914px" width="9" height="13"><path d="M0 0L9 13V0Z" fill="#8de6d0"/></svg>

<!-- horizontal scrollbar -->
<div style="left:1075px;top:933px;width:743px;height:14px;background:#45ab92;border-top:2px solid #2d8272"></div>
<div style="left:1090px;top:935px;width:634px;height:12px;background:#52cbac;border-top:1px solid #8de6d0;border-bottom:1px solid #2d8272;border-left:1px solid #8de6d0"></div>
<svg style="position:absolute;left:1076px;top:934px" width="740" height="13"><path d="M0 6.5L11 0V13Z" fill="#52cbac" stroke="#8de6d0"/><path d="M739 6.5L728 0V13Z" fill="#52cbac" stroke="#8de6d0"/></svg>

<!-- nav row -->
<div style="left:1073px;top:950px;width:756px;height:3px;background:#2d8272"></div>
<div style="left:1074px;top:953px;width:42px;height:34px;background:#ffc24d;border:1px solid #2d8272;font-size:11px;line-height:30px;padding-left:3px">T27</div>
<div class="bv" style="left:1118px;top:953px;width:57px;height:34px"></div><div class="f" style="left:1123px;top:962px">First</div>
<div class="bv" style="left:1177px;top:953px;width:33px;height:34px"></div><div class="f" style="left:1181px;top:962px;letter-spacing:-.5px">&lt;--</div>
<div class="bv" style="left:1212px;top:953px;width:33px;height:34px"></div><div class="f" style="left:1216px;top:962px;letter-spacing:-.5px">--&gt;</div>
<div class="bv" style="left:1247px;top:953px;width:47px;height:34px"></div><div class="f" style="left:1251px;top:962px;letter-spacing:-.6px">Last</div>
<div style="left:1295px;top:953px;width:60px;height:34px;background:#9cd8d8"></div><div class="f" style="left:1298px;top:962px;letter-spacing:-.4px">Index:</div>
<div style="left:1356px;top:953px;width:63px;height:34px;background:#9cd8d8"></div>
<div style="left:1356px;top:955px;width:60px;height:30px;background:#52cbac;border:2px solid;border-color:#2d8272 #8de6d0 #8de6d0 #2d8272"></div>
<div style="left:1420px;top:953px;width:28px;height:34px" class="bv"></div>
<div style="left:1450px;top:953px;width:28px;height:34px" class="bv"></div>
<div style="left:1480px;top:953px;width:28px;height:34px" class="bv"></div>
<svg style="position:absolute;left:1420px;top:953px" width="88" height="34" viewBox="0 0 88 34">
<g fill="none" stroke="#111"><rect x="6.5" y="7.5" width="15" height="19"/><rect x="36.5" y="7.5" width="15" height="19"/><rect x="66.5" y="7.5" width="15" height="19"/><path d="M14 10Q9 14 12 18L14 24L16 18Q19 14 14 10Z"/><path d="M40 10H47L40 17L47 22H40"/></g>
<path d="M68 9L80 25M80 9L68 25" stroke="#e01010" stroke-width="2"/>
</svg>
<div style="left:1634px;top:953px;width:87px;height:34px;background:#9cd8d8"></div>
<div class="bv" style="left:1641px;top:958px;width:79px;height:26px"></div><div class="f" style="left:1646px;top:963px;letter-spacing:-.5px">ml/my</div>
<div class="nub" style="left:1700px;top:967px"></div>
<div style="left:1722px;top:953px;width:107px;height:34px;background:#9cd8d8"></div>
<div class="bv" style="left:1729px;top:958px;width:100px;height:26px;border-right:0"></div><div class="f" style="left:1735px;top:963px">Regular</div>
<div class="nub" style="left:1815px;top:967px;width:14px"></div>
<div style="left:1073px;top:987px;width:756px;height:5px;background:#111"></div>
<div style="left:1286px;top:992px;width:543px;height:16px;background:#9cd8d8"></div>
<div class="bv" style="left:1288px;top:995px;width:128px;height:20px"></div><div class="f" style="left:1294px;top:999px;font-size:14.5px">Combine Tools</div>
<div style="left:1417px;top:992px;width:2px;height:16px;background:#111"></div>
<div class="f" style="left:1429px;top:999px;font-size:14.5px">Merge Tools :</div>
<div class="bv" style="left:1565px;top:995px;width:212px;height:20px"></div><div class="f" style="left:1570px;top:999px;font-size:14.5px">Update Tools Numbers</div>
<div class="bv" style="left:1780px;top:995px;width:60px;height:20px"></div><div class="f" style="left:1785px;top:999px;font-size:14.5px">Manual</div>
<svg style="position:absolute;left:1740px;top:995px" width="30" height="13"><path d="M4 13L27 2V13Z" fill="#f07030"/></svg>
</div></body></html>
